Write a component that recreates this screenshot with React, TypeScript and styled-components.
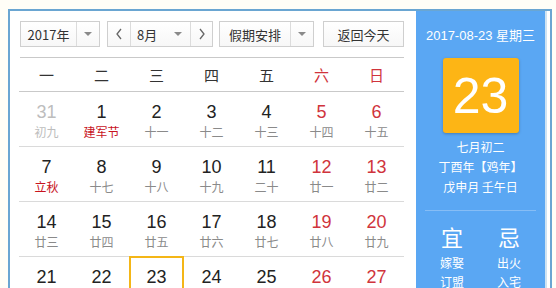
import React from "react";
import styled, { createGlobalStyle } from "styled-components";

const Global = createGlobalStyle`
  html, body { margin: 0; padding: 0; background: #fffef7; overflow: hidden; }
  body { font-family: "Liberation Sans", "Noto Sans CJK SC", sans-serif; }
`;

const Page = styled.div`
  padding: 9px 0 0 8px;
  width: 556px;
  height: 288px;
  box-sizing: border-box;
  overflow: hidden;
`;

const Frame = styled.div`
  display: flex;
  width: 540px;
  height: 290px;
  border: 2px solid #6aa6d2;
  border-bottom: none;
  background: #fff;
`;

const Main = styled.div`
  width: 406px;
  box-sizing: border-box;
  padding: 10px 0 0 9px;
`;

const Toolbar = styled.div`
  display: flex;
  align-items: center;
  height: 26px;
  margin-left: 1px;
  padding-bottom: 10px;
  border-bottom: 1px solid #c9c9c9;
  width: 384px;
`;

const Box = styled.div<{ $w: number; $ml?: number }>`
  display: flex;
  height: 26px;
  width: ${(p) => p.$w}px;
  margin-left: ${(p) => p.$ml ?? 0}px;
  box-sizing: border-box;
  border: 1px solid #cfcfcf;
  background: linear-gradient(#ffffff, #f7f7f7);
  font-family: "Noto Sans CJK SC", sans-serif;
  font-size: 13px;
  color: #333;
`;

const Part = styled.div<{ $w?: number; $line?: boolean }>`
  display: flex;
  align-items: center;
  justify-content: center;
  ${(p) => (p.$w ? `width: ${p.$w}px;` : "flex: 1;")}
  border-left: ${(p) => (p.$line ? "1px solid #dcdcdc" : "none")};
  line-height: 1;
`;

const MonthLabel = styled.span`
  margin-left: 6px;
  flex: 1;
`;

const CaretSlot = styled.span`
  display: flex;
  margin-right: 8px;
`;

const Caret = styled.span`
  width: 0;
  height: 0;
  border-left: 4px solid transparent;
  border-right: 4px solid transparent;
  border-top: 4px solid #8a8a8a;
`;

const Chevron = styled.svg`
  width: 8px;
  height: 12px;
`;

const Grid = styled.div`
  display: grid;
  grid-template-columns: repeat(7, 55px);
  width: 385px;
`;

const Head = styled.div<{ $red?: boolean }>`
  height: 33px;
  display: flex;
  align-items: center;
  justify-content: center;
  font-family: "Noto Sans CJK SC", sans-serif;
  font-size: 15px;
  color: ${(p) => (p.$red ? "#d0343c" : "#333")};
  border-bottom: 1px solid #c9c9c9;
`;

const Cell = styled.div`
  position: relative;
  height: 55px;
  border-bottom: 1px solid #dadada;
  display: flex;
  flex-direction: column;
  align-items: center;
  padding-top: 10px;
  box-sizing: border-box;
`;

const TodayRing = styled.div`
  position: absolute;
  left: 0;
  top: -1px;
  right: 0;
  bottom: 0;
  border: 2px solid #f4b617;
`;

const Num = styled.div<{ $tone: string }>`
  font-size: 18px;
  line-height: 20px;
  color: ${(p) => p.$tone};
`;

const Lunar = styled.div<{ $tone: string }>`
  font-family: "Noto Sans CJK SC", sans-serif;
  font-size: 12px;
  line-height: 16px;
  margin-top: 2px;
  color: ${(p) => p.$tone};
`;

const Side = styled.div`
  width: 129px;
  background: #5aa7f3;
  display: flex;
  flex-direction: column;
  align-items: center;
  color: #fff;
  font-family: "Noto Sans CJK SC", sans-serif;
`;

const DateLine = styled.div`
  margin-top: 16px;
  font-size: 13px;
  line-height: 18px;
  font-family: "Liberation Sans", "Noto Sans CJK SC", sans-serif;
`;

const BigDay = styled.div`
  margin-top: 13px;
  width: 76px;
  height: 75px;
  background: #fdb515;
  border-radius: 3px;
  box-shadow: 0 1px 3px rgba(0, 0, 0, 0.25);
  display: flex;
  align-items: center;
  justify-content: center;
  font-family: "Liberation Sans", sans-serif;
  font-size: 50px;
  color: #fff;
`;

const InfoLine = styled.div`
  font-size: 12px;
  line-height: 20px;
`;

const Info = styled.div`
  margin-top: 4px;
  display: flex;
  flex-direction: column;
  align-items: center;
`;

const Rule = styled.div`
  width: 111px;
  height: 1px;
  background: #86bdf5;
  margin-top: 13px;
`;

const Advice = styled.div`
  display: flex;
  gap: 33px;
  margin-top: 12px;
`;

const AdviceCol = styled.div`
  display: flex;
  flex-direction: column;
  align-items: center;
`;

const AdviceHead = styled.div`
  font-size: 22px;
  line-height: 26px;
  margin-bottom: 4px;
`;

const AdviceItem = styled.div`
  font-size: 12px;
  line-height: 19px;
`;

const RightEdge = styled.div`
  width: 2px;
  background: #cfe3f2;
`;

type Day = { n: number; l: string; kind?: "prev" | "fest" | "wk"; today?: boolean };

const weeks: Day[][] = [
  [
    { n: 31, l: "初九", kind: "prev" },
    { n: 1, l: "建军节", kind: "fest" },
    { n: 2, l: "十一" },
    { n: 3, l: "十二" },
    { n: 4, l: "十三" },
    { n: 5, l: "十四", kind: "wk" },
    { n: 6, l: "十五", kind: "wk" },
  ],
  [
    { n: 7, l: "立秋", kind: "fest" },
    { n: 8, l: "十七" },
    { n: 9, l: "十八" },
    { n: 10, l: "十九" },
    { n: 11, l: "二十" },
    { n: 12, l: "廿一", kind: "wk" },
    { n: 13, l: "廿二", kind: "wk" },
  ],
  [
    { n: 14, l: "廿三" },
    { n: 15, l: "廿四" },
    { n: 16, l: "廿五" },
    { n: 17, l: "廿六" },
    { n: 18, l: "廿七" },
    { n: 19, l: "廿八", kind: "wk" },
    { n: 20, l: "廿九", kind: "wk" },
  ],
  [
    { n: 21, l: "三十" },
    { n: 22, l: "初一" },
    { n: 23, l: "初二", today: true },
    { n: 24, l: "初三" },
    { n: 25, l: "初四" },
    { n: 26, l: "初五", kind: "wk" },
    { n: 27, l: "初六", kind: "wk" },
  ],
];

const heads = ["一", "二", "三", "四", "五", "六", "日"];

function numTone(d: Day) {
  if (d.kind === "prev") return "#bdbdbd";
  if (d.kind === "wk") return "#d0343c";
  return "#222";
}
function lunarTone(d: Day) {
  if (d.kind === "prev") return "#bdbdbd";
  if (d.kind === "fest") return "#c8141e";
  return "#8a8a8a";
}

export default function App() {
  return (
    <Page>
      <Global />
      <Frame>
        <Main>
          <Toolbar>
            <Box $w={80}>
              <Part>2017年</Part>
              <Part $w={22} $line>
                <Caret />
              </Part>
            </Box>
            <Box $w={106} $ml={7}>
              <Part $w={22}>
                <Chevron viewBox="0 0 8 12">
                  <path d="M6 1 L2 6 L6 11" fill="none" stroke="#666" strokeWidth="1.3" />
                </Chevron>
              </Part>
              <Part $line>
                <MonthLabel>8月</MonthLabel>
                <CaretSlot>
                  <Caret />
                </CaretSlot>
              </Part>
              <Part $w={21} $line>
                <Chevron viewBox="0 0 8 12">
                  <path d="M2 1 L6 6 L2 11" fill="none" stroke="#666" strokeWidth="1.3" />
                </Chevron>
              </Part>
            </Box>
            <Box $w={95} $ml={6}>
              <Part>假期安排</Part>
              <Part $w={22} $line>
                <Caret />
              </Part>
            </Box>
            <Box $w={81} $ml={9}>
              <Part>返回今天</Part>
            </Box>
          </Toolbar>
          <Grid>
            {heads.map((h, i) => (
              <Head key={h} $red={i >= 5}>
                {h}
              </Head>
            ))}
            {weeks.flat().map((d) => (
              <Cell key={`${d.n}-${d.l}`}>
                {d.today && <TodayRing />}
                <Num $tone={numTone(d)}>{d.n}</Num>
                <Lunar $tone={lunarTone(d)}>{d.l}</Lunar>
              </Cell>
            ))}
          </Grid>
        </Main>
        <Side>
          <DateLine>2017-08-23 星期三</DateLine>
          <BigDay>23</BigDay>
          <Info>
            <InfoLine>七月初二</InfoLine>
            <InfoLine>丁酉年【鸡年】</InfoLine>
            <InfoLine>戊申月 壬午日</InfoLine>
          </Info>
          <Rule />
          <Advice>
            <AdviceCol>
              <AdviceHead>宜</AdviceHead>
              <AdviceItem>嫁娶</AdviceItem>
              <AdviceItem>订盟</AdviceItem>
            </AdviceCol>
            <AdviceCol>
              <AdviceHead>忌</AdviceHead>
              <AdviceItem>出火</AdviceItem>
              <AdviceItem>入宅</AdviceItem>
            </AdviceCol>
          </Advice>
        </Side>
        <RightEdge />
      </Frame>
    </Page>
  );
}
